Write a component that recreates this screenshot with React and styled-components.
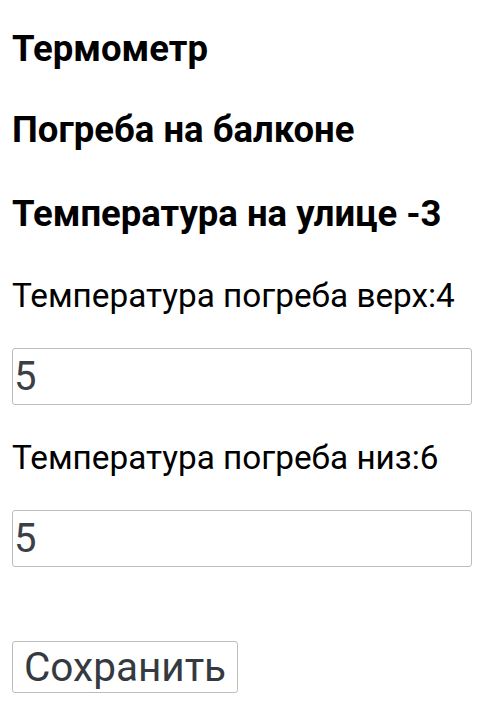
import React from "react";
import styled, { createGlobalStyle } from "styled-components";

const GlobalStyle = createGlobalStyle`
  body {
    margin: 0;
    background: #ffffff;
    font-family: Roboto, "Noto Sans", sans-serif;
    color: #000000;
  }
`;

const Page = styled.div`
  display: flex;
  flex-direction: column;
  align-items: flex-start;
  padding: 28px 8px 0 12px;
`;

const Heading = styled.h3`
  margin: 0 0 ${(p) => p.gap}px 0;
  font-size: 36.5px;
  line-height: 42px;
  font-weight: 700;
`;

const Label = styled.div`
  font-size: 33.3px;
  line-height: 39px;
  margin-bottom: ${(p) => p.gap}px;
`;

const NumberInput = styled.input`
  box-sizing: border-box;
  width: 460px;
  height: 57px;
  margin: 0 0 ${(p) => p.gap}px 0;
  padding: 0 1px;
  border: 1px solid #bdbdbd;
  border-radius: 3px;
  font-family: Roboto, sans-serif;
  font-size: 40px;
  color: #3b4046;
  outline: none;
`;

const SaveButton = styled.button`
  box-sizing: border-box;
  height: 52px;
  padding: 0 11px;
  background: #ffffff;
  border: 1px solid #bdbdbd;
  border-radius: 3px;
  font-family: Roboto, sans-serif;
  font-size: 40.5px;
  line-height: 48px;
  color: #343a40;
`;

export default function App() {
  return (
    <>
      <GlobalStyle />
      <Page>
        <Heading gap={39}>Термометр</Heading>
        <Heading gap={42}>Погреба на балконе</Heading>
        <Heading gap={41}>Температура на улице -3</Heading>
        <Label gap={33}>Температура погреба верх:4</Label>
        <NumberInput type="text" defaultValue="5" gap={33} />
        <Label gap={33}>Температура погреба низ:6</Label>
        <NumberInput type="text" defaultValue="5" gap={74} />
        <SaveButton>Сохранить</SaveButton>
      </Page>
    </>
  );
}
